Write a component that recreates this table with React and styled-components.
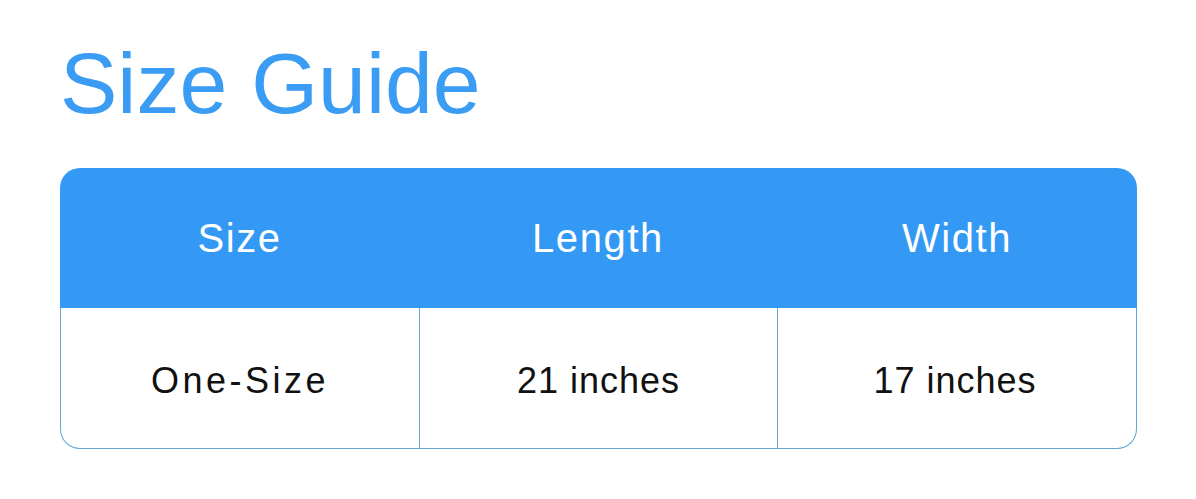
import React from "react";
import styled, { createGlobalStyle } from "styled-components";

const Global = createGlobalStyle`
  html, body { margin: 0; padding: 0; background: #ffffff; }
  body { font-family: "Liberation Sans", Arial, sans-serif; }
`;

const Page = styled.div`
  padding: 40px 0 0 60px;
  box-sizing: border-box;
  width: 1196px;
  height: 499px;
`;

const Title = styled.h1`
  margin: 0;
  font-family: "Liberation Sans", Arial, sans-serif;
  font-weight: 400;
  font-size: 86px;
  line-height: 86px;
  color: #3a9cf2;
`;

const Table = styled.div`
  margin-top: 42px;
  width: 1077px;
`;

const HeaderRow = styled.div`
  display: grid;
  grid-template-columns: 359px 358px 360px;
  height: 140px;
  background: #3399f5;
  border-radius: 20px 20px 0 0;
`;

const HeadCell = styled.div`
  display: flex;
  align-items: center;
  justify-content: center;
  color: #ffffff;
  font-size: 40px;
  letter-spacing: 1.6px;
  padding-top: 1px;
`;

const BodyRow = styled.div`
  display: grid;
  grid-template-columns: 359px 358px 360px;
  height: 141px;
  box-sizing: border-box;
  border: 1px solid #5ea7d8;
  border-top: none;
  border-radius: 0 0 20px 20px;
`;

const Cell = styled.div`
  display: flex;
  align-items: center;
  justify-content: center;
  color: #111111;
  font-size: 36px;
  letter-spacing: ${(p) => p.$spacing || 1}px;
  border-right: ${(p) => (p.$last ? "none" : "1px solid #5ea7d8")};
  padding-top: 5px;
  padding-right: ${(p) => (p.$last ? 6 : 0)}px;
`;

export default function App() {
  return (
    <>
      <Global />
      <Page>
        <Title>Size Guide</Title>
        <Table>
          <HeaderRow>
            <HeadCell>Size</HeadCell>
            <HeadCell>Length</HeadCell>
            <HeadCell>Width</HeadCell>
          </HeaderRow>
          <BodyRow>
            <Cell $spacing={3.5}>One-Size</Cell>
            <Cell>21 inches</Cell>
            <Cell $last>17 inches</Cell>
          </BodyRow>
        </Table>
      </Page>
    </>
  );
}
